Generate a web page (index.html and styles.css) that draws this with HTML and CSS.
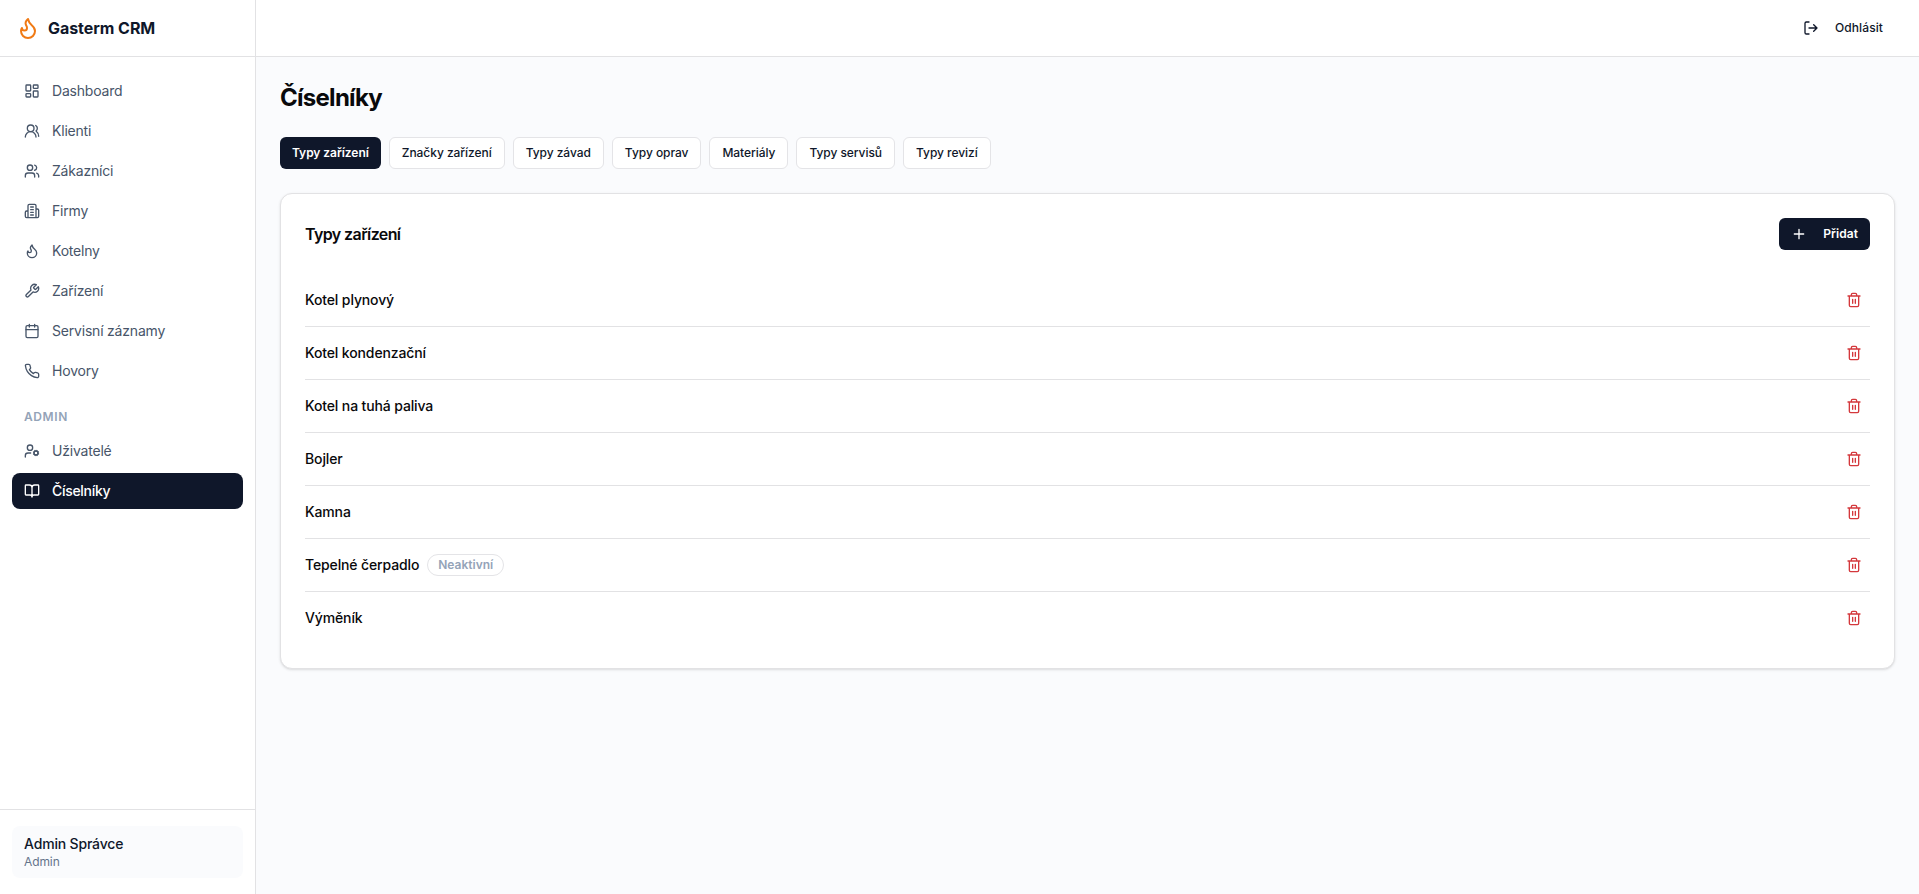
FILE: index.html
```html
<!DOCTYPE html>
<html lang="cs">
<head>
    <meta charset="UTF-8">
    <meta name="viewport" content="width=device-width, initial-scale=1.0">
    <title>Gasterm CRM</title>
    <link rel="stylesheet" href="styles.css">
</head>
<body>
    <svg class="sprite">
        <symbol id="flame" viewBox="0 0 24 24"><path d="M8.5 14.5A2.5 2.5 0 0 0 11 12c0-1.38-.5-2-1-3-1.072-2.143-.224-4.054 2-6 .5 2.5 2 4.9 4 6.5 2 1.6 3 3.5 3 5.5a7 7 0 1 1-14 0c0-1.153.433-2.294 1-3a2.5 2.5 0 0 0 2.5 2.5z"/></symbol>
        <symbol id="trash" viewBox="0 0 24 24"><path d="M3 6h18M19 6v14a2 2 0 0 1-2 2H7a2 2 0 0 1-2-2V6M8 6V4a2 2 0 0 1 2-2h4a2 2 0 0 1 2 2v2M10 11v6M14 11v6"/></symbol>
    </svg>

    <aside class="sidebar">
        <div class="brand">
            <svg class="icon brand-icon"><use href="#flame"/></svg>
            <span>Gasterm CRM</span>
        </div>

        <nav class="menu">
            <a class="menu-item">
                <svg class="icon" viewBox="0 0 24 24"><rect x="3" y="3" width="7" height="9" rx="1"/><rect x="14" y="3" width="7" height="5" rx="1"/><rect x="14" y="12" width="7" height="9" rx="1"/><rect x="3" y="16" width="7" height="5" rx="1"/></svg>
                Dashboard
            </a>
            <a class="menu-item">
                <svg class="icon" viewBox="0 0 24 24"><path d="M18 21a8 8 0 0 0-16 0"/><circle cx="10" cy="8" r="5"/><path d="M22 20c0-3.37-2-6.5-4-8a5 5 0 0 0-.45-8.3"/></svg>
                Klienti
            </a>
            <a class="menu-item">
                <svg class="icon" viewBox="0 0 24 24"><path d="M16 21v-2a4 4 0 0 0-4-4H6a4 4 0 0 0-4 4v2"/><circle cx="9" cy="7" r="4"/><path d="M22 21v-2a4 4 0 0 0-3-3.87M16 3.13a4 4 0 0 1 0 7.75"/></svg>
                Zákazníci
            </a>
            <a class="menu-item">
                <svg class="icon" viewBox="0 0 24 24"><path d="M6 22V4a2 2 0 0 1 2-2h8a2 2 0 0 1 2 2v18ZM6 12H4a2 2 0 0 0-2 2v6a2 2 0 0 0 2 2h2M18 9h2a2 2 0 0 1 2 2v9a2 2 0 0 1-2 2h-2M10 6h4M10 10h4M10 14h4M10 18h4"/></svg>
                Firmy
            </a>
            <a class="menu-item">
                <svg class="icon"><use href="#flame"/></svg>
                Kotelny
            </a>
            <a class="menu-item">
                <svg class="icon" viewBox="0 0 24 24"><path d="M14.7 6.3a1 1 0 0 0 0 1.4l1.6 1.6a1 1 0 0 0 1.4 0l3.77-3.77a6 6 0 0 1-7.94 7.94l-6.91 6.91a2.12 2.12 0 0 1-3-3l6.91-6.91a6 6 0 0 1 7.94-7.94l-3.76 3.76z"/></svg>
                Zařízení
            </a>
            <a class="menu-item">
                <svg class="icon" viewBox="0 0 24 24"><path d="M8 2v4M16 2v4M3 10h18"/><rect x="3" y="4" width="18" height="18" rx="2"/></svg>
                Servisní záznamy
            </a>
            <a class="menu-item">
                <svg class="icon" viewBox="0 0 24 24"><path d="M22 16.92v3a2 2 0 0 1-2.18 2 19.79 19.79 0 0 1-8.63-3.07 19.5 19.5 0 0 1-6-6 19.79 19.79 0 0 1-3.07-8.67A2 2 0 0 1 4.11 2h3a2 2 0 0 1 2 1.72 12.84 12.84 0 0 0 .7 2.81 2 2 0 0 1-.45 2.11L8.09 9.91a16 16 0 0 0 6 6l1.27-1.27a2 2 0 0 1 2.11-.45 12.84 12.84 0 0 0 2.81.7A2 2 0 0 1 22 16.92z"/></svg>
                Hovory
            </a>
            <div class="menu-label">Admin</div>
            <a class="menu-item">
                <svg class="icon" viewBox="0 0 24 24"><path d="M10 15H6a4 4 0 0 0-4 4v2"/><circle cx="9" cy="7" r="4"/><circle cx="18" cy="15" r="3"/><path d="m21.7 16.4-.9-.3M15.2 13.9l-.9-.3M16.6 18.7l.3-.9M19.1 12.2l.3-.9M19.6 18.7l-.4-1M16.8 12.3l-.4-1M14.3 16.6l1-.4M20.7 13.8l1-.4"/></svg>
                Uživatelé
            </a>
            <a class="menu-item active">
                <svg class="icon" viewBox="0 0 24 24"><path d="M12 7v14M3 18a1 1 0 0 1-1-1V4a1 1 0 0 1 1-1h5a4 4 0 0 1 4 4 4 4 0 0 1 4-4h5a1 1 0 0 1 1 1v13a1 1 0 0 1-1 1h-6a3 3 0 0 0-3 3 3 3 0 0 0-3-3z"/></svg>
                Číselníky
            </a>
        </nav>

        <div class="account">
            <div class="account-box">
                <div class="account-name">Admin Správce</div>
                <div class="account-role">Admin</div>
            </div>
        </div>
    </aside>

    <div class="page">
        <header class="topbar">
            <button class="btn btn-ghost">
                <svg class="icon" viewBox="0 0 24 24"><path d="M9 21H5a2 2 0 0 1-2-2V5a2 2 0 0 1 2-2h4M16 17l5-5-5-5M21 12H9"/></svg>
                Odhlásit
            </button>
        </header>

        <main class="content">
            <h1>Číselníky</h1>

            <div class="tabs">
                <button class="btn btn-primary">Typy zařízení</button>
                <button class="btn btn-outline">Značky zařízení</button>
                <button class="btn btn-outline">Typy závad</button>
                <button class="btn btn-outline">Typy oprav</button>
                <button class="btn btn-outline">Materiály</button>
                <button class="btn btn-outline">Typy servisů</button>
                <button class="btn btn-outline">Typy revizí</button>
            </div>

            <section class="card">
                <div class="card-header">
                    <h2>Typy zařízení</h2>
                    <button class="btn btn-primary">
                        <svg class="icon" viewBox="0 0 24 24"><path d="M5 12h14M12 5v14"/></svg>
                        Přidat
                    </button>
                </div>

                <ul class="list">
                    <li>Kotel plynový <button class="delete"><svg class="icon"><use href="#trash"/></svg></button></li>
                    <li>Kotel kondenzační <button class="delete"><svg class="icon"><use href="#trash"/></svg></button></li>
                    <li>Kotel na tuhá paliva <button class="delete"><svg class="icon"><use href="#trash"/></svg></button></li>
                    <li>Bojler <button class="delete"><svg class="icon"><use href="#trash"/></svg></button></li>
                    <li>Kamna <button class="delete"><svg class="icon"><use href="#trash"/></svg></button></li>
                    <li>Tepelné čerpadlo <span class="badge">Neaktivní</span> <button class="delete"><svg class="icon"><use href="#trash"/></svg></button></li>
                    <li>Výměník <button class="delete"><svg class="icon"><use href="#trash"/></svg></button></li>
                </ul>
            </section>
        </main>
    </div>
</body>
</html>
```
FILE: styles.css
```css
* {
    box-sizing: border-box;
}

body {
    margin: 0;
    display: flex;
    height: 100vh;
    overflow: hidden;
    background-color: #fafbfd;
    color: #09090b;
    font: 14px/20px Inter, sans-serif;
}

h1, h2, ul {
    margin: 0;
    padding: 0;
}

.sprite {
    display: none;
}

.icon {
    width: 16px;
    height: 16px;
    flex-shrink: 0;
    fill: none;
    stroke: currentColor;
    stroke-width: 2;
    stroke-linecap: round;
    stroke-linejoin: round;
}

/* Sidebar */
.sidebar {
    display: flex;
    flex-direction: column;
    width: 256px;
    flex-shrink: 0;
    background-color: white;
    border-right: 1px solid #e2e2e4;
}

.brand {
    display: flex;
    align-items: center;
    gap: 8px;
    height: 57px;
    padding: 0 16px;
    border-bottom: 1px solid #e2e2e4;
    color: #0f172a;
    font-size: 16px;
    font-weight: 700;
    letter-spacing: -0.05px;
}

.brand-icon {
    width: 24px;
    height: 24px;
    color: #f07a14;
}

.menu {
    flex: 1;
    display: flex;
    flex-direction: column;
    gap: 4px;
    padding: 16px 12px;
}

.menu-item {
    display: flex;
    align-items: center;
    gap: 12px;
    padding: 8px 12px;
    border-radius: 8px;
    color: #475569;
    letter-spacing: -0.2px;
}

.menu-item.active {
    background-color: #0f172a;
    color: white;
    font-weight: 500;
    letter-spacing: -0.3px;
}

.menu-label {
    padding: 16px 12px 4px;
    color: #94a3b8;
    font-size: 12px;
    line-height: 16px;
    font-weight: 600;
    letter-spacing: 0.6px;
    text-transform: uppercase;
}

.account {
    padding: 16px 12px;
    border-top: 1px solid #e2e2e4;
}

.account-box {
    padding: 8px 12px;
    border-radius: 8px;
    background-color: #fafbfd;
}

.account-name {
    color: #0f172a;
    font-weight: 500;
    letter-spacing: -0.17px;
}

.account-role {
    color: #64748b;
    font-size: 12px;
    line-height: 16px;
    letter-spacing: -0.1px;
}

/* Page */
.page {
    flex: 1;
    display: flex;
    flex-direction: column;
}

.topbar {
    display: flex;
    align-items: center;
    justify-content: flex-end;
    height: 57px;
    padding: 0 24px;
    background-color: white;
    border-bottom: 1px solid #e2e2e4;
}

.content {
    display: flex;
    flex-direction: column;
    gap: 24px;
    padding: 24px;
}

h1 {
    padding-top: 1px;
    font-size: 24px;
    line-height: 31px;
    font-weight: 700;
    letter-spacing: -0.72px;
}

.btn {
    display: inline-flex;
    align-items: center;
    gap: 16px;
    height: 32px;
    padding: 0 12px;
    border: none;
    border-radius: 6px;
    color: #0f172a;
    font: 500 12px/16px Inter, sans-serif;
}

.btn-ghost {
    background: none;
    letter-spacing: 0.1px;
}

.btn-primary {
    background-color: #0f172a;
    color: white;
    font-weight: 600;
    letter-spacing: 0.05px;
}

.btn-outline {
    background-color: white;
    border: 1px solid #e4e4e7;
}

.tabs {
    display: flex;
    gap: 8px;
}

.tabs .btn {
    letter-spacing: -0.05px;
}

/* Card */
.card {
    display: flex;
    flex-direction: column;
    gap: 24px;
    padding: 24px;
    background-color: white;
    border: 1px solid #e2e2e4;
    border-radius: 12px;
    box-shadow: 0 1px 3px rgba(0, 0, 0, 0.1), 0 1px 2px -1px rgba(0, 0, 0, 0.1);
}

.card-header {
    display: flex;
    align-items: center;
    justify-content: space-between;
}

h2 {
    font-size: 16px;
    line-height: 24px;
    font-weight: 600;
    letter-spacing: -0.6px;
}

.list {
    list-style: none;
}

.list li {
    display: flex;
    align-items: center;
    gap: 8px;
    padding: 10px 0;
    font-weight: 500;
    letter-spacing: -0.13px;
}

.list li + li {
    border-top: 1px solid #e2e2e4;
}

.badge {
    padding: 2px 10px;
    border: 1px solid #e4e4e7;
    border-radius: 11px;
    color: #94a3b8;
    font-size: 12px;
    line-height: 16px;
    font-weight: 600;
    letter-spacing: 0;
}

.delete {
    display: flex;
    align-items: center;
    justify-content: center;
    width: 32px;
    height: 32px;
    margin-left: auto;
    padding: 0;
    border: none;
    background: none;
    color: #d4383c;
}
```
